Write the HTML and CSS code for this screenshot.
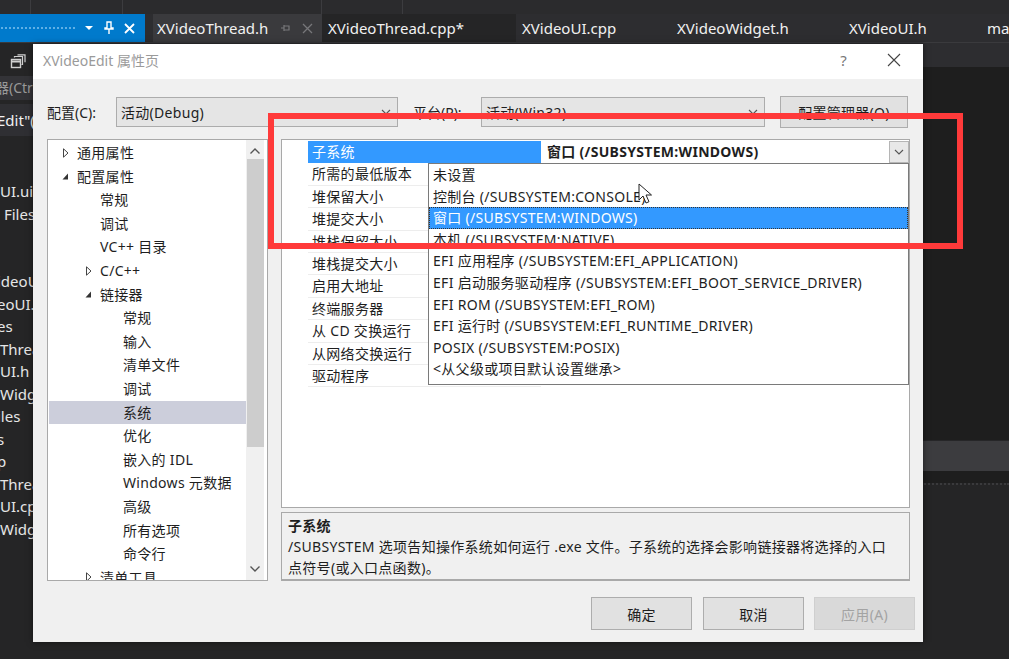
FILE: index.html
```html
<!DOCTYPE html>
<html lang="zh-CN">
<head>
<meta charset="utf-8">
<title>XVideoEdit 属性页</title>
<link rel="stylesheet" href="styles.css">
</head>
<body>
<div class="ide">
  <div class="topstrip">
    <span class="ts-sep s1"></span><span class="ts-sep s2"></span><span class="ts-sep s3"></span><span class="ts-sep s4"></span>
  </div>
  <div class="tabbar">
    <div class="toolhead">
      <span class="grip"></span>
      <svg class="th-ico" width="10" height="6" viewBox="0 0 10 6"><path d="M1 1h8L5 5z" fill="#fff"/></svg>
      <svg class="th-ico" width="10" height="14" viewBox="0 0 10 14"><path d="M3 1h4v6h2v1H1V7h2zM5 8v5" stroke="#fff" stroke-width="1.4" fill="none"/></svg>
      <svg class="th-ico" width="11" height="11" viewBox="0 0 11 11"><path d="M1 1l9 9M10 1l-9 9" stroke="#fff" stroke-width="1.8"/></svg>
    </div>
    <div class="tab t1">XVideoThread.h
      <svg class="tab-ico" width="10" height="10" viewBox="0 0 10 10"><path d="M1 5h3M4 2v6M4 3h5v4H4" stroke="#77777a" stroke-width="1.2" fill="none"/></svg>
      <svg class="tab-ico" width="11" height="11" viewBox="0 0 11 11"><path d="M1 1l9 9M10 1l-9 9" stroke="#77777a" stroke-width="1.3"/></svg>
    </div>
    <div class="tab t2">XVideoThread.cpp*</div>
    <div class="tab t3">XVideoUI.cpp</div>
    <div class="tab t4">XVideoWidget.h</div>
    <div class="tab t5">XVideoUI.h</div>
    <div class="tab t6">main.cpp</div>
  </div>
  <div class="workspace">
    <div class="explorer">
      <div class="ex-head">
        <svg width="16" height="15" viewBox="0 0 16 15"><rect x="1.5" y="5.5" width="9" height="8" fill="none" stroke="#d0d0d0" stroke-width="1.4"/><path d="M1.5 7.5h9" stroke="#d0d0d0" stroke-width="2"/><path d="M4.5 3.5V2.5h8v8h-1M7.5 0.8h7.5v7.5" fill="none" stroke="#d0d0d0" stroke-width="1.2"/></svg>
      </div>
      <div class="ex-search">器(Ctrl+;)</div>
      <div class="ex-sel">Edit"(1 个项目)</div>
      <div class="ex-list">
        <div class="ex-row">UI.ui</div>
        <div class="ex-row">&nbsp;Files</div>
        <div class="ex-row"></div>
        <div class="ex-row"></div>
        <div class="ex-row cut">ideoUI</div>
        <div class="ex-row cut">eoUI.h</div>
        <div class="ex-row cut">es</div>
        <div class="ex-row">Thread</div>
        <div class="ex-row">UI.h</div>
        <div class="ex-row">Widget</div>
        <div class="ex-row cut">iles</div>
        <div class="ex-row cut">s</div>
        <div class="ex-row cut">p</div>
        <div class="ex-row">Thread</div>
        <div class="ex-row">UI.cpp</div>
        <div class="ex-row">Widget</div>
      </div>
    </div>
    <div class="editor">
      <div class="ed-bar"></div>
      <div class="ed-code"></div>
      <div class="ed-band"></div>
      <div class="ed-panel"></div>
    </div>
  </div>
</div>

<div class="dialog">
  <div class="titlebar">
    <span class="title">XVideoEdit 属性页</span>
    <span class="tb-help">?</span>
    <svg class="tb-close" width="14" height="14" viewBox="0 0 14 14"><path d="M1 1l12 12M13 1L1 13" stroke="#444" stroke-width="1.1"/></svg>
  </div>
  <div class="dbody">
    <div class="cfgrow">
      <span class="lbl lbl1">配置(C):</span>
      <div class="combo c1"><span>活动(Debug)</span><svg width="10" height="6" viewBox="0 0 10 6"><path d="M1 1l4 4 4-4" stroke="#555" stroke-width="1.1" fill="none"/></svg></div>
      <span class="lbl lbl2">平台(P):</span>
      <div class="combo c2"><span>活动(Win32)</span><svg width="10" height="6" viewBox="0 0 10 6"><path d="M1 1l4 4 4-4" stroke="#555" stroke-width="1.1" fill="none"/></svg></div>
      <div class="btn cfgbtn">配置管理器(O)</div>
    </div>
    <div class="mainarea">
      <div class="tree">
        <div class="tree-list">
          <div class="trow d0"><svg class="tw" width="15" height="10" viewBox="0 0 15 10"><path d="M1.5 0.8v8.4L6 5z" fill="none" stroke="#444" stroke-width="1"/></svg>通用属性</div>
          <div class="trow d0"><svg class="tw" width="15" height="10" viewBox="0 0 15 10"><path d="M6 2.5v6H0.5z" fill="#333"/></svg>配置属性</div>
          <div class="trow d1">常规</div>
          <div class="trow d1">调试</div>
          <div class="trow d1">VC++ 目录</div>
          <div class="trow d1"><svg class="tw" width="15" height="10" viewBox="0 0 15 10"><path d="M1.5 0.8v8.4L6 5z" fill="none" stroke="#444" stroke-width="1"/></svg>C/C++</div>
          <div class="trow d1"><svg class="tw" width="15" height="10" viewBox="0 0 15 10"><path d="M6 2.5v6H0.5z" fill="#333"/></svg>链接器</div>
          <div class="trow d2">常规</div>
          <div class="trow d2">输入</div>
          <div class="trow d2">清单文件</div>
          <div class="trow d2">调试</div>
          <div class="trow d2 sel">系统</div>
          <div class="trow d2">优化</div>
          <div class="trow d2">嵌入的 IDL</div>
          <div class="trow d2">Windows 元数据</div>
          <div class="trow d2">高级</div>
          <div class="trow d2">所有选项</div>
          <div class="trow d2">命令行</div>
          <div class="trow d1"><svg class="tw" width="15" height="10" viewBox="0 0 15 10"><path d="M1.5 0.8v8.4L6 5z" fill="none" stroke="#444" stroke-width="1"/></svg>清单工具</div>
        </div>
        <div class="vscroll">
          <svg class="sarrow" width="12" height="8" viewBox="0 0 12 8"><path d="M1.5 6.5L6 2l4.5 4.5" stroke="#555" stroke-width="1.4" fill="none"/></svg>
          <div class="thumb"></div>
          <svg class="sarrow down" width="12" height="8" viewBox="0 0 12 8"><path d="M1.5 1.5L6 6l4.5-4.5" stroke="#555" stroke-width="1.4" fill="none"/></svg>
        </div>
      </div>
      <div class="rightcol">
        <div class="grid">
          <div class="grow first"><div class="gut"></div><div class="gname sel">子系统</div><div class="gval"><b>窗口 (/SUBSYSTEM:WINDOWS)</b><span class="ddbtn"><svg width="10" height="6" viewBox="0 0 10 6"><path d="M1 1l4 4 4-4" stroke="#555" stroke-width="1.1" fill="none"/></svg></span></div></div>
          <div class="grow"><div class="gut"></div><div class="gname">所需的最低版本</div><div class="gval"></div></div>
          <div class="grow"><div class="gut"></div><div class="gname">堆保留大小</div><div class="gval"></div></div>
          <div class="grow"><div class="gut"></div><div class="gname">堆提交大小</div><div class="gval"></div></div>
          <div class="grow"><div class="gut"></div><div class="gname">堆栈保留大小</div><div class="gval"></div></div>
          <div class="grow"><div class="gut"></div><div class="gname">堆栈提交大小</div><div class="gval"></div></div>
          <div class="grow"><div class="gut"></div><div class="gname">启用大地址</div><div class="gval"></div></div>
          <div class="grow"><div class="gut"></div><div class="gname">终端服务器</div><div class="gval"></div></div>
          <div class="grow"><div class="gut"></div><div class="gname">从 CD 交换运行</div><div class="gval"></div></div>
          <div class="grow"><div class="gut"></div><div class="gname">从网络交换运行</div><div class="gval"></div></div>
          <div class="grow"><div class="gut"></div><div class="gname">驱动程序</div><div class="gval"></div></div>

          <div class="dropdown">
            <div class="ditem">未设置</div>
            <div class="ditem">控制台 (/SUBSYSTEM:CONSOLE)</div>
            <div class="ditem sel">窗口 (/SUBSYSTEM:WINDOWS)</div>
            <div class="ditem">本机 (/SUBSYSTEM:NATIVE)</div>
            <div class="ditem">EFI 应用程序 (/SUBSYSTEM:EFI_APPLICATION)</div>
            <div class="ditem">EFI 启动服务驱动程序 (/SUBSYSTEM:EFI_BOOT_SERVICE_DRIVER)</div>
            <div class="ditem">EFI ROM (/SUBSYSTEM:EFI_ROM)</div>
            <div class="ditem">EFI 运行时 (/SUBSYSTEM:EFI_RUNTIME_DRIVER)</div>
            <div class="ditem">POSIX (/SUBSYSTEM:POSIX)</div>
            <div class="ditem">&lt;从父级或项目默认设置继承&gt;</div>
          </div>
        </div>
        <div class="desc">
          <div class="desc-title">子系统</div>
          <div class="desc-text">/SUBSYSTEM 选项告知操作系统如何运行 .exe 文件。子系统的选择会影响链接器将选择的入口<br>点符号(或入口点函数)。</div>
        </div>
      </div>
    </div>
    <div class="btnrow">
      <div class="btn ok">确定</div>
      <div class="btn cancel">取消</div>
      <div class="btn apply disabled">应用(A)</div>
    </div>
  </div>
</div>

<svg class="cursor" width="14" height="22" viewBox="0 0 14 22"><path d="M1 1v16l4-4 3 7 3-1.3-3-6.7h5.5z" fill="#fff" stroke="#222" stroke-width="1"/></svg>

<div class="annot"></div>
</body>
</html>
```

FILE: styles.css
```css
* { box-sizing: border-box; margin: 0; padding: 0; }
html, body { width: 1009px; height: 659px; overflow: hidden; }
body {
  background: #1e1e1e;
  font-family: "Noto Sans", "Noto Sans CJK SC", sans-serif;
  position: relative;
  color: #1e1e1e;
}

/* ---------- IDE background ---------- */
.ide { display: flex; flex-direction: column; height: 659px; }
.topstrip { height: 14px; background: #2b2b2d; position: relative; display: flex; }
.ts-sep { width: 1px; height: 14px; background: #3c3c3f; }
.s1 { margin-left: 30px; }
.s2 { margin-left: 91px; }
.s3 { margin-left: 198px; }
.s4 { margin-left: 80px; }

.tabbar { height: 29px; background: #2d2d30; display: flex; border-bottom: 1px solid #3a3a3d; }
.toolhead {
  width: 145px; background: #007acc; display: flex; align-items: center; padding-left: 0;
}
.grip {
  width: 76px; height: 5px; margin-right: 8px;
  background: radial-gradient(circle, #5fb0e6 0.9px, transparent 1.2px) 0 0 / 4px 4px;
}
.th-ico { margin-right: 10px; }
.tab {
  color: #f1f1f1; font-size: 15px; line-height: 28px; white-space: nowrap;
  display: flex; align-items: center; overflow: hidden;
}
.t1 { margin-left: 8px; width: 169px; padding-left: 4px; background: #3a3a3d; }
.tab-ico { margin-left: 12px; }
.t2 { width: 194px; padding-left: 6px; background: #252526; }
.t3 { width: 155px; padding-left: 6px; }
.t4 { width: 172px; padding-left: 6px; }
.t5 { width: 138px; padding-left: 6px; }
.t6 { flex: 1; padding-left: 6px; }

.workspace { flex: 1; display: flex; }
.explorer { width: 33px; background: #252526; overflow: hidden; display: flex; flex-direction: column; }
.ex-head { height: 33px; padding: 9px 0 0 10px; }
.ex-search {
  height: 24px; background: #333337; color: #999; font-size: 14px; line-height: 24px;
  white-space: nowrap; margin-left: -5px;
}
.ex-sel {
  height: 32px; margin-top: 4px; background: #2f2f33; color: #f1f1f1; font-size: 15px; line-height: 32px;
  white-space: nowrap; margin-left: -3px;
}
.ex-list { padding-top: 44px; }
.ex-row {
  height: 22.5px; color: #e6e6e6; font-size: 15px; line-height: 22.5px; white-space: nowrap;
}
.ex-row.cut { margin-left: -3px; }

.editor { flex: 1; display: flex; flex-direction: column; }
.ed-bar { height: 24px; background: #2d2d30; }
.ed-code { height: 374px; background: #1e1e1e; border-bottom: 1px solid #262628; }
.ed-band { height: 30px; background: #3c3c3f; }
.ed-panel {
  flex: 1; background: #252526;
  border-top: 2px dotted #3a3a3c;
  margin-top: 12px;
}

/* ---------- Dialog ---------- */
.dialog {
  position: absolute; left: 33px; top: 44px; width: 890px; height: 598px;
  background: #f0f0f0; box-shadow: 0 0 6px rgba(0,0,0,0.5);
  display: flex; flex-direction: column;
  letter-spacing: 0.3px;
}
.titlebar {
  height: 35px; background: #fff; display: flex; align-items: center; padding-left: 10px;
  padding-bottom: 3px;
}
.title { color: #9a9a9a; font-size: 14px; flex: 1; letter-spacing: 0; }
.tb-help { color: #777; font-size: 15px; margin-right: 40px; }
.tb-close { margin-right: 22px; }

.dbody { flex: 1; padding: 17px 13px 0 14px; display: flex; flex-direction: column; }
.cfgrow { height: 32px; display: flex; align-items: center; font-size: 14px; }
.lbl { white-space: nowrap; letter-spacing: 0; }
.lbl1 { width: 69px; }
.lbl2 { width: 68px; margin-left: 15px; }
.combo {
  height: 30px; background: #e5e5e5; border: 1px solid #acacac;
  display: flex; align-items: center; justify-content: space-between;
  padding: 0 6px 0 4px; font-size: 14px;
}
.c1 { width: 282px; }
.c2 { width: 284px; }
.btn {
  background: #e1e1e1; border: 1px solid #adadad; font-size: 14px;
  display: flex; align-items: center; justify-content: center; white-space: nowrap;
}
.cfgbtn { width: 128px; height: 32px; margin-left: 15px; overflow: hidden; }

.mainarea { margin-top: 11px; height: 442px; display: flex; }
.tree {
  width: 221px; height: 442px; background: #fff; border: 1px solid #a9a9a9;
  display: flex; overflow: hidden;
}
.tree-list { flex: 1; padding-top: 1px; padding-left: 1px; overflow: hidden; }
.trow {
  height: 23.6px; line-height: 23.6px; font-size: 14px; white-space: nowrap; color: #1e1e1e;
  display: flex; align-items: center;
}
.trow.d0 { padding-left: 28px; }
.trow.d1 { padding-left: 51px; }
.trow.d2 { padding-left: 74px; }
.trow.sel { background: #cccedb; }
.tw { margin-left: -15px; flex: none; }
.vscroll {
  width: 18px; margin: 0 3px 0 0; background: #f0f0f0;
  display: flex; flex-direction: column; align-items: center;
}
.sarrow { margin-top: 7px; flex: none; }
.thumb { width: 17px; height: 288px; background: #cdcdcd; margin-top: 4px; }
.sarrow.down { margin-top: auto; margin-bottom: 7px; }

.rightcol { margin-left: 13px; width: 629px; display: flex; flex-direction: column; }
.grid {
  height: 369px; background: #fff; border: 1px solid #a9a9a9; padding-top: 1px;
  position: relative;
}
.grow { height: 22.4px; display: flex; font-size: 14px; line-height: 22.4px; }
.gut { width: 26px; flex: none; }
.gname {
  width: 233px; flex: none; padding-left: 4px; white-space: nowrap;
  border-bottom: 1px solid #ededed; color: #1e1e1e;
}
.gname.sel { background: #3399ff; color: #fff; border-bottom-color: #3399ff; }
.gval { flex: 1; display: flex; align-items: center; padding-left: 6px; white-space: nowrap; }
.gval b { font-weight: 700; flex: 1; }
.ddbtn {
  width: 20px; height: 22px; background: #e8e8e8; border: 1px solid #b5b5b5;
  display: flex; align-items: center; justify-content: center; margin-top: -1px;
}

.dropdown {
  position: absolute; left: 146px; top: 23px; width: 481px; height: 222px;
  background: #fff; border: 1px solid #7a7a7a; padding-top: 0;
}
.ditem {
  height: 21.6px; line-height: 21.6px; font-size: 14px; padding-left: 4px; white-space: nowrap;
  color: #1e1e1e;
}
.ditem.sel {
  background: #3399ff; color: #fff; outline: 1px dotted #333; outline-offset: -1px;
}

.desc {
  margin-top: 4px; height: 69px; background: #f0f0f0; border: 1px solid #a9a9a9;
  border-bottom-width: 2px; padding: 3px 0 0 6px; font-size: 14px; white-space: nowrap;
}
.desc-title { font-weight: 700; line-height: 20px; }
.desc-text { line-height: 21px; }

.btnrow { margin-top: 16px; margin-right: -5px; display: flex; justify-content: flex-end; }
.btnrow .btn { width: 101px; height: 33px; }
.cancel { margin-left: 11px; }
.apply { margin-left: 10px; }
.btn.disabled { background: #d9d9d9; color: #a3a3a3; border-color: #cfcfcf; }

/* ---------- Overlays ---------- */
.cursor { position: absolute; left: 638px; top: 183px; }
.annot {
  position: absolute; left: 268px; top: 113px; width: 695px; height: 136px;
  border: 6px solid #ff3a3a;
}
```
